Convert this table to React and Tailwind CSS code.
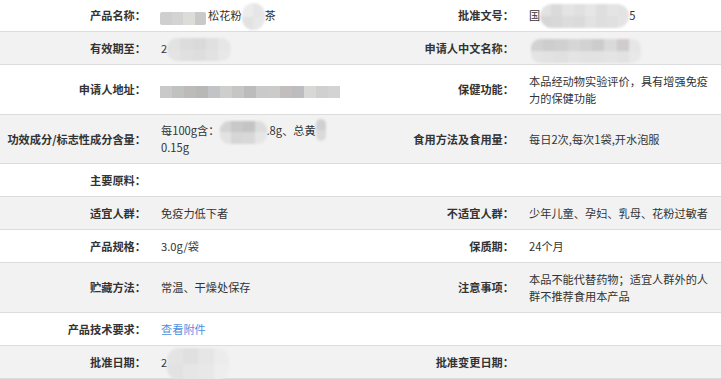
import React from "react";

function Blob({ w, top, h, rows, rounded = "rounded-full", left = 0, blur = "blur-[1px]" }) {
  return (
    <span className={`relative inline-block align-top h-[17px]`} style={{ width: w }}>
      <span
        className={`absolute flex flex-col overflow-hidden ${rounded} ${blur}`}
        style={{ top, height: h, left, width: w }}
      >
        {rows.map((r, i) => (
          <span key={i} className="flex flex-1">
            {r.map((c, j) => (
              <span key={j} className="flex-1" style={{ background: c }} />
            ))}
          </span>
        ))}
      </span>
    </span>
  );
}

function Row({ gray, py = "py-[7.5px]", l1, v1, l2, v2 }) {
  return (
    <div
      className={`grid grid-cols-[150px_218px_150px_1fr] border-b border-[#dcdcdc] ${gray ? "bg-[#f2f2f2]" : "bg-white"}`}
    >
      <div className={`flex items-center justify-end pr-[4px] font-bold text-[#333] whitespace-nowrap ${py}`}>{l1}</div>
      <div className={`flex items-center pl-[11px] pr-[4px] text-[#333] ${py}`}>
        <div>{v1}</div>
      </div>
      <div className={`flex items-center justify-end pr-[4px] font-bold text-[#333] whitespace-nowrap ${py}`}>{l2}</div>
      <div className={`flex items-center pl-[11px] pr-[6px] text-[#333] ${py}`}>
        <div>{v2}</div>
      </div>
    </div>
  );
}

export default function App() {
  return (
    <div className="w-[721px] h-[379px] overflow-hidden bg-white font-['Noto_Sans_CJK_SC','Microsoft_YaHei',sans-serif] text-[11.2px] leading-[17px]">
      <div className="-mt-[1px]">
        <Row
          l1="产品名称："
          v1={
            <span className="whitespace-nowrap">
              <Blob
                w={46}
                top={5}
                h={13}
                left={-1}
                rounded="rounded-[2px]"
                blur="blur-[0.4px]"
                rows={[["#cfcfcf", "#d3d3d3", "#dcdcd8", "#c9c9c9"]]}
              />
              <span className="ml-[1px]">松花粉</span>
              <Blob
                w={23}
                top={-3.5}
                h={27}
                rounded="rounded-full"
                rows={[["#ececec", "#e6e6e6"], ["#e2e2e2", "#e8e8e8"]]}
              />
              茶
            </span>
          }
          l2="批准文号："
          v2={
            <span className="whitespace-nowrap">
              国
              <Blob
                w={89}
                top={-2.5}
                h={24}
                rows={[
                  ["#e2e2e2", "#dadada", "#e4e4e4", "#e0e0e0", "#e6e6e6", "#dedede", "#e4e4e4", "#e2e2e2"],
                  ["#d6d6d6", "#d8d8d8", "#dcdcdc", "#dadada", "#e2e2e2", "#dedede", "#e0e0e0", "#e4e4e4"],
                ]}
              />
              5
            </span>
          }
        />
        <Row
          gray
          l1="有效期至："
          v1={
            <span className="whitespace-nowrap">
              2
              <Blob
                w={64}
                top={-1.5}
                h={23}
                rounded="rounded-[10px]"
                rows={[
                  ["#e2e2e2", "#dcdcdc", "#dadada", "#e0e0e0", "#e6e6e6"],
                  ["#e4e4e4", "#e0e0e0", "#dedede", "#e2e2e2", "#e8e8e8"],
                ]}
              />
            </span>
          }
          l2="申请人中文名称："
          v2={
            <span className="whitespace-nowrap">
              <Blob
                w={110}
                top={-0.5}
                h={24}
                left={2}
                rounded="rounded-[9px]"
                rows={[
                  ["#d2d2d2", "#cdcdcd", "#d0d0d0", "#d6d6d6", "#d2d2d2", "#cccccc", "#dadada", "#cfcccb", "#e6e6e6"],
                  ["#e4e4e4", "#e2e2e2", "#e0e0e0", "#e4e4e4", "#e2e2e2", "#e2e2e2", "#e4e4e4", "#e2e2e2", "#e8e8e8"],
                ]}
              />
            </span>
          }
        />
        <Row
          l1="申请人地址："
          v1={
            <span className="whitespace-nowrap">
              <Blob
                w={180}
                top={4.5}
                h={12}
                left={-1}
                rounded="rounded-none"
                blur="blur-[0.3px]"
                rows={[
                  [
                    "#c9c9c9", "#c0c2c0", "#bdbbb9", "#b8b8b6", "#c2c3c6", "#cececc", "#c6c6c6", "#bcbcbc",
                    "#cacacb", "#cbcbcb", "#c2bebd", "#bdbdc0", "#d8d8d6", "#d0d0d0", "#d3d3d3",
                  ],
                ]}
              />
            </span>
          }
          l2="保健功能："
          v2={
            <>
              本品经动物实验评价，具有增强免疫力的保健功能
            </>
          }
        />
        <Row
          gray
          py="py-[7px]"
          l1="功效成分/标志性成分含量："
          v1={
            <>
              <span className="whitespace-nowrap">
                每100g含：
                <Blob
                  w={47}
                  top={-1.5}
                  h={23}
                  rounded="rounded-[9px]"
                  rows={[
                    ["#d4d4d4", "#c8c8c8", "#c4c4c4", "#dcdcdc"],
                    ["#e2e2e2", "#d6d6d6", "#d8d8d8", "#e6e6e6"],
                  ]}
                />
                .8g、总黄
                <Blob
                  w={10}
                  top={-3.5}
                  h={22}
                  rounded="rounded-[5px]"
                  rows={[["#d0d0d0"], ["#dadada"]]}
                />
              </span>
              <br />
              0.15g
            </>
          }
          l2="食用方法及食用量："
          v2="每日2次,每次1袋,开水泡服"
        />
        <Row l1="主要原料：" v1="" l2="" v2="" />
        <Row gray l1="适宜人群：" v1="免疫力低下者" l2="不适宜人群：" v2="少年儿童、孕妇、乳母、花粉过敏者" />
        <Row l1="产品规格：" v1="3.0g/袋" l2="保质期：" v2="24个月" />
        <Row
          gray
          l1="贮藏方法："
          v1="常温、干燥处保存"
          l2="注意事项："
          v2="本品不能代替药物；适宜人群外的人群不推荐食用本产品"
        />
        <Row
          l1="产品技术要求："
          v1={<span className="text-[#4d8fe0] cursor-pointer">查看附件</span>}
          l2=""
          v2=""
        />
        <Row
          gray
          l1="批准日期："
          v1={
            <span className="whitespace-nowrap">
              2
              <Blob
                w={62}
                top={-6}
                h={32}
                rounded="rounded-[12px]"
                rows={[
                  ["#e4e4e4", "#e0e0e0", "#e6e6e6", "#ececec"],
                  ["#e2e2e2", "#e6e6e6", "#e8e8e8", "#eeeeee"],
                ]}
              />
            </span>
          }
          l2="批准变更日期："
          v2=""
        />
      </div>
    </div>
  );
}
